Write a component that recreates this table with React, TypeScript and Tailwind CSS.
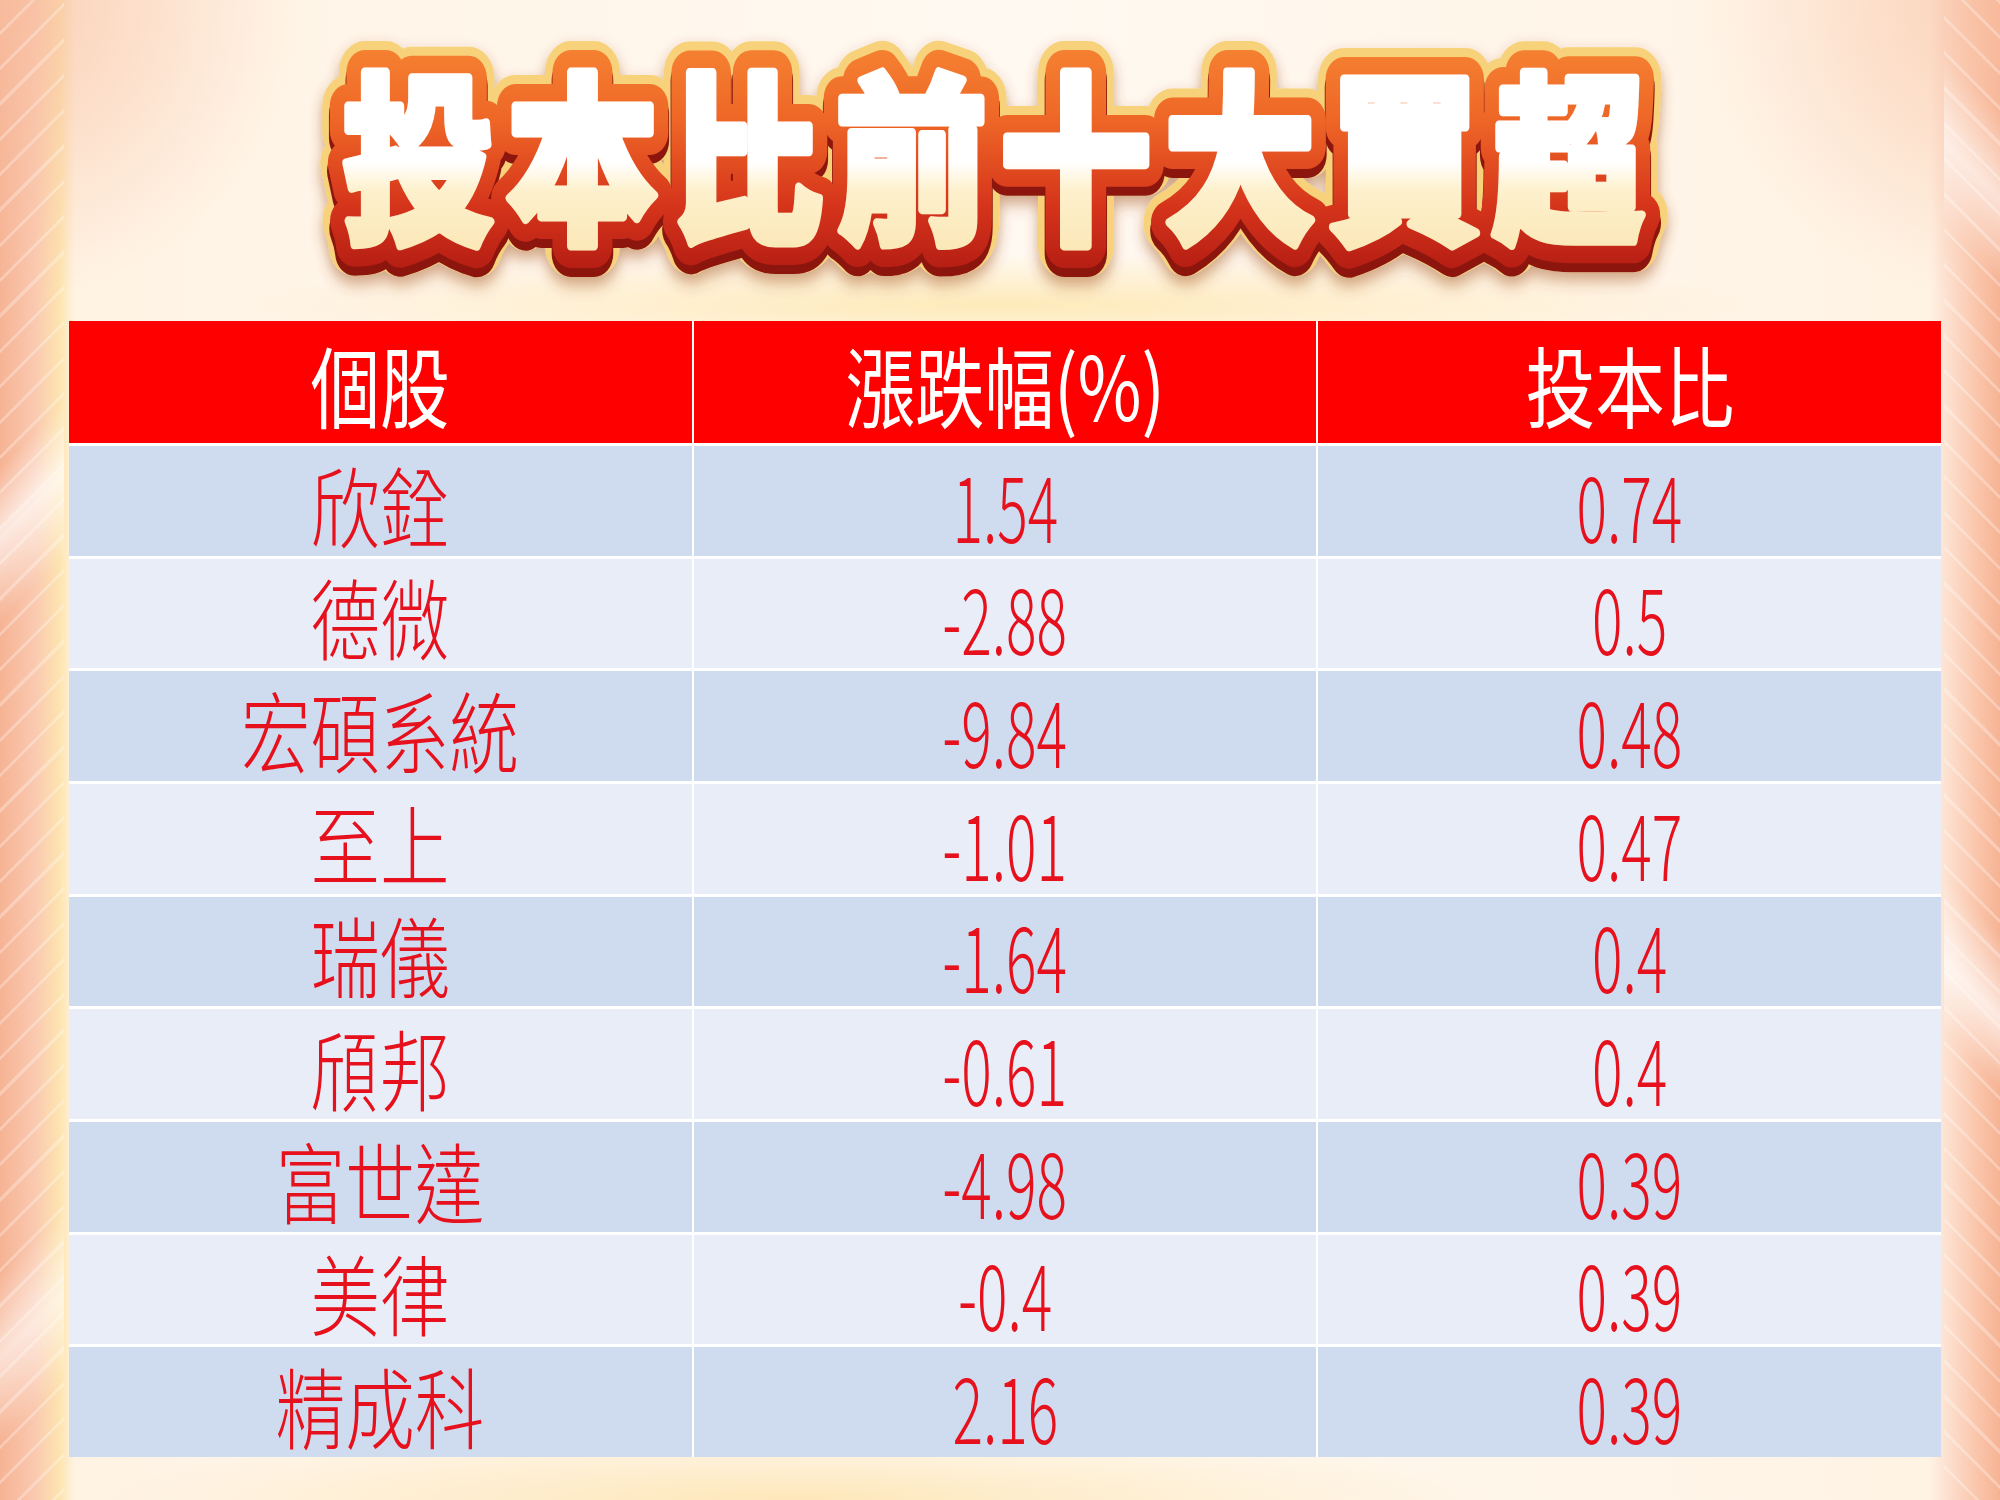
import React from "react";

const rows = [
  { name: "欣銓", chg: "1.54", ratio: "0.74" },
  { name: "德微", chg: "-2.88", ratio: "0.5" },
  { name: "宏碩系統", chg: "-9.84", ratio: "0.48" },
  { name: "至上", chg: "-1.01", ratio: "0.47" },
  { name: "瑞儀", chg: "-1.64", ratio: "0.4" },
  { name: "頎邦", chg: "-0.61", ratio: "0.4" },
  { name: "富世達", chg: "-4.98", ratio: "0.39" },
  { name: "美律", chg: "-0.4", ratio: "0.39" },
  { name: "精成科", chg: "2.16", ratio: "0.39" },
];

const title = "投本比前十大買超";

const titleFont = {
  x: 0,
  y: 0,
  textAnchor: "middle" as const,
  fontSize: 182,
  fontWeight: 900,
  letterSpacing: 16,
  strokeLinejoin: "round" as const,
  fontFamily: "'Noto Sans CJK TC','Noto Sans CJK SC',sans-serif",
};

// title art: gold rim, red band and white face drawn from one text
function Title() {
  return (
    <div className="flex h-[321px] justify-center">
      <svg width="2000" height="321" viewBox="0 0 2000 321">
        <defs>
          <linearGradient id="band" x1="0" y1="0" x2="0" y2="1">
            <stop offset="0" stopColor="#f88d36" />
            <stop offset="0.4" stopColor="#ee6526" />
            <stop offset="0.72" stopColor="#d5341b" />
            <stop offset="1" stopColor="#b01a12" />
          </linearGradient>
          <linearGradient id="face" x1="0" y1="0" x2="0" y2="1">
            <stop offset="0" stopColor="#ffffff" />
            <stop offset="0.55" stopColor="#ffffff" />
            <stop offset="0.66" stopColor="#fdf0cc" />
            <stop offset="1" stopColor="#fbe4ae" />
          </linearGradient>
          <filter id="soft" x="-10%" y="-30%" width="120%" height="160%">
            <feDropShadow dx="0" dy="8" stdDeviation="8" floodColor="#963c0a" floodOpacity="0.45" />
          </filter>
          <text id="tt" {...titleFont}>
            {title}
          </text>
        </defs>
        <g transform="translate(1000 228) scale(0.83 1)">
          <use href="#tt" fill="#f7d27a" stroke="#f7d27a" strokeWidth={62} filter="url(#soft)" />
          <use href="#tt" y={8} fill="#8c150d" stroke="#8c150d" strokeWidth={46} />
          <use href="#tt" fill="url(#band)" stroke="url(#band)" strokeWidth={44} />
          <text {...titleFont} fill="url(#face)" stroke="url(#face)" strokeWidth={9}>
            {title}
          </text>
        </g>
      </svg>
    </div>
  );
}

function Cjk({ children, head }: { children: React.ReactNode; head?: boolean }) {
  return (
    <span
      className={`inline-block scale-x-[0.79] whitespace-nowrap text-[88px] leading-none ${head ? "font-normal" : "font-light"}`}
    >
      {children}
    </span>
  );
}

function Num({ children }: { children: React.ReactNode }) {
  return <span className="inline-block scale-x-[0.62] whitespace-nowrap text-[92px] font-light leading-none">{children}</span>;
}

export default function App() {
  return (
    <div className="flex h-[1500px] w-[2000px] flex-col overflow-hidden font-['Noto_Sans_CJK_TC','Noto_Sans_CJK_SC',sans-serif] [background:repeating-linear-gradient(135deg,rgba(255,255,255,0)_0px,rgba(255,255,255,0)_22px,rgba(255,255,255,0.28)_22px,rgba(255,255,255,0.28)_25px)_left_top/64px_100%_no-repeat,repeating-linear-gradient(45deg,rgba(255,255,255,0)_0px,rgba(255,255,255,0)_22px,rgba(255,255,255,0.28)_22px,rgba(255,255,255,0.28)_25px)_right_top/56px_100%_no-repeat,linear-gradient(135deg,rgba(255,255,255,0)_0px,rgba(255,255,255,0)_330px,rgba(255,255,255,0.7)_380px,rgba(255,255,255,0)_440px,rgba(255,255,255,0)_900px,rgba(255,255,255,0.6)_960px,rgba(255,255,255,0)_1020px)_left_top/64px_100%_no-repeat,linear-gradient(45deg,rgba(255,255,255,0)_0px,rgba(255,255,255,0)_330px,rgba(255,255,255,0.7)_380px,rgba(255,255,255,0)_440px,rgba(255,255,255,0)_900px,rgba(255,255,255,0.6)_960px,rgba(255,255,255,0)_1020px)_right_top/56px_100%_no-repeat,radial-gradient(ellipse_760px_50px_at_50%_305px,rgba(253,222,140,0.55),rgba(253,222,140,0)),radial-gradient(ellipse_700px_70px_at_40%_1500px,rgba(253,220,150,0.6),rgba(253,220,150,0)),radial-gradient(circle_300px_at_0px_0px,rgba(248,190,160,0.7),rgba(248,190,160,0)),radial-gradient(circle_300px_at_2000px_0px,rgba(248,190,160,0.65),rgba(248,190,160,0)),linear-gradient(90deg,#f6b394_0px,#fac9b0_35px,#fde4b0_60px,#fff3e4_75px,#fff9f1_50%,#fff3e4_1930px,#fde2d2_1945px,#fac7ad_1975px,#f6b394_2000px)]">
      <Title />
      <div className="ml-[69px] grid h-[1136px] w-[1872px] grid-cols-3 grid-rows-[122px_repeat(9,1fr)] gap-x-[2px] gap-y-[3px] bg-white">
        {["個股", "漲跌幅(%)", "投本比"].map((h) => (
          <div key={h} className="flex items-center justify-center bg-[#ff0000] pt-[2px] text-white">
            <Cjk head>{h}</Cjk>
          </div>
        ))}
        {rows.map((r, i) => {
          const bg = i % 2 === 0 ? "bg-[#cfdbee]" : "bg-[#e8edf7]";
          return (
            <React.Fragment key={r.name}>
              <div className={`flex items-center justify-center ${bg} pt-[4px] text-[#e6111c]`}>
                <Cjk>{r.name}</Cjk>
              </div>
              <div className={`flex items-center justify-center ${bg} pt-[4px] text-[#e6111c]`}>
                <Num>{r.chg}</Num>
              </div>
              <div className={`flex items-center justify-center ${bg} pt-[4px] text-[#e6111c]`}>
                <Num>{r.ratio}</Num>
              </div>
            </React.Fragment>
          );
        })}
      </div>
    </div>
  );
}
